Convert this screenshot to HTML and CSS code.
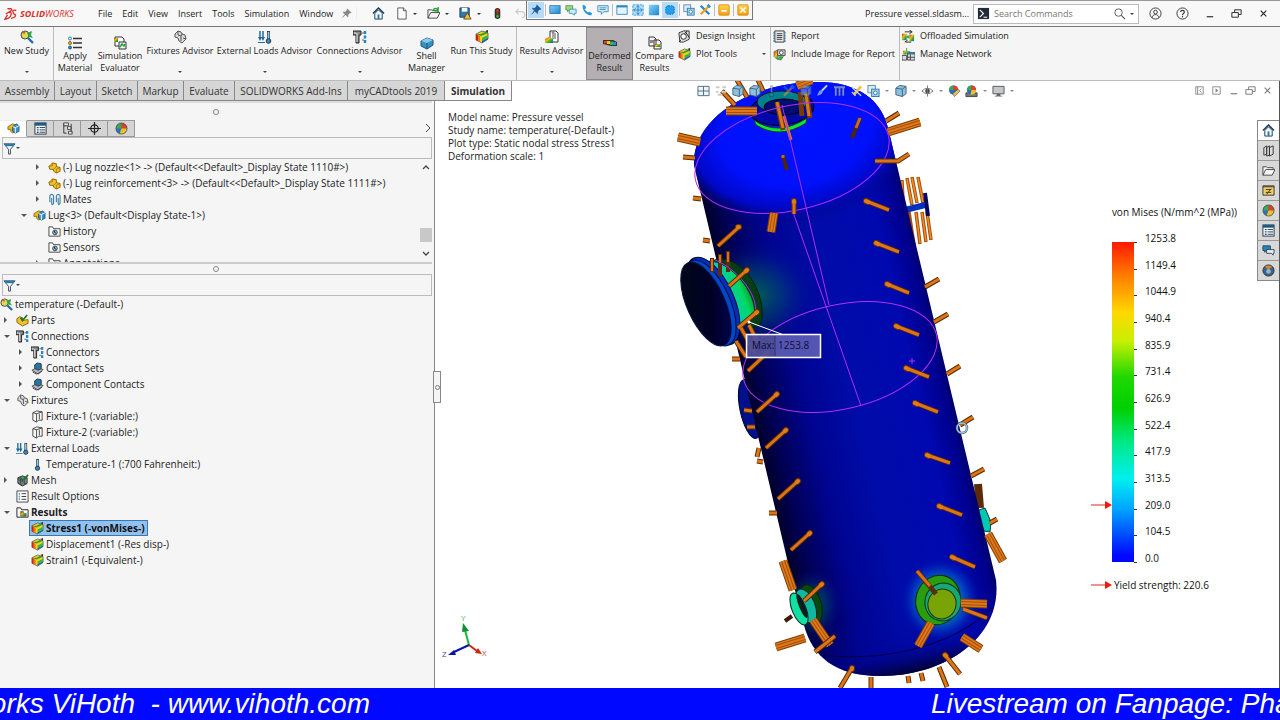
FILE: index.html
```html
<!DOCTYPE html>
<html lang="en">
<head>
<meta charset="utf-8">
<title>SOLIDWORKS - Pressure vessel.sldasm</title>
<link rel="stylesheet" href="styles.css">
</head>
<body>
<svg class="defs" aria-hidden="true">
  <defs>
    <linearGradient id="hot" x1="0" y1="0" x2="1" y2="1"><stop offset="0" stop-color="#e02010"/><stop offset=".4" stop-color="#f2c010"/><stop offset=".65" stop-color="#30b030"/><stop offset="1" stop-color="#1060c0"/></linearGradient>
    <linearGradient id="sky" x1="0" y1="0" x2="1" y2="1"><stop offset="0" stop-color="#8ad4f8"/><stop offset="1" stop-color="#1a86d0"/></linearGradient>
    <linearGradient id="amber" x1="0" y1="0" x2="0" y2="1"><stop offset="0" stop-color="#ffd84a"/><stop offset="1" stop-color="#f59c10"/></linearGradient>
  </defs>
  <symbol id="i-study" viewBox="0 0 14 14"><circle cx="5" cy="5" r="4" fill="#d8dc50" stroke="#446"/><path d="M8 8l5 5" stroke="#1c6ea8" stroke-width="2.4"/><path d="M7 3l5-2-1 4 2 3-4-1z" fill="#3aa04a"/><path d="M2 2l3 1" stroke="#e06020" stroke-width="2"/></symbol>
  <symbol id="i-material" viewBox="0 0 14 14"><path d="M5 2.5h9M5 7h9M5 11.500h9" stroke="#333" stroke-width="1.500"/><circle cx="2" cy="2.500" r="1.500" fill="#fff" stroke="#2a7aa8"/><circle cx="2" cy="7" r="1.500" fill="#f4c030" stroke="#8a6a10"/><circle cx="2" cy="11.500" r="1.500" fill="#2a8cc0" stroke="#205a80"/></symbol>
  <symbol id="i-eval" viewBox="0 0 14 14"><path d="M2 1h7l2 2v7H2z" fill="#fff" stroke="#333"/><path d="M1 2h4v4H1z" fill="url(#hot)"/><path d="M6 6h7v7H6z" fill="#f4f4f4" stroke="#333"/><path d="M7 11l2-3 2 2 1-2" stroke="#28a038" stroke-width="1.500" fill="none"/></symbol>
  <symbol id="i-fixture" viewBox="0 0 14 14"><path d="M2 4l3-3 3 1 1 2 3 1 1 4-4 4-3-2-1-3-3-1z" fill="#dcdcdc" stroke="#555"/><path d="M5 1v4l3 1 1-2M8 6v5M10 8l3 1" stroke="#555" fill="none"/></symbol>
  <symbol id="i-loads" viewBox="0 0 14 14"><path d="M2 1v8M5 1v8" stroke="#1f6f9c" stroke-width="1.500"/><path d="M0 7l2 4 1.500-3L5 11l2-4zM0 12h7v1H0z" fill="#1f6f9c"/><path d="M10.500 1v8" stroke="#444" stroke-width="3"/><path d="M10.500 2v8" stroke="#8fd0f0" stroke-width="1.500"/><circle cx="10.500" cy="11" r="2.300" fill="#2a8cc8" stroke="#333"/></symbol>
  <symbol id="i-bolt" viewBox="0 0 14 14"><path d="M0 1h8v4H6v8H3V5H0z" fill="#888" stroke="#222"/><path d="M2 2v2M4 3v9" stroke="#e8e8e8"/><path d="M12 1v12" stroke="#2088c8" stroke-width="2.500" stroke-dasharray="3 1.500"/><path d="M9 3h2M9 10h2" stroke="#666"/></symbol>
  <symbol id="i-shell" viewBox="0 0 14 14"><path d="M1 5l6-3 6 2v5l-6 4-6-3z" fill="#3a90c4" stroke="#1d5478"/><path d="M1 5l6 2 6-3-6-2z" fill="#8cc8e8"/><path d="M7 7v6" stroke="#1d5478"/></symbol>
  <symbol id="i-plot" viewBox="0 0 14 14"><path d="M1 4l6-3 6 2v6l-6 4-6-3z" fill="#f8d020" stroke="#444" stroke-width=".7"/><path d="M1 4l2 1v6l-2-1z" fill="#d82010"/><path d="M3 5l2 1v6l-2-1z" fill="#f07818"/><path d="M1 4l5 2 7-3-3-1-4 2z" fill="#30a030"/><path d="M7 8l6-3v3l-6 3z" fill="#38b840"/><path d="M7 11l6-3v1.500L7 13z" fill="#1a60b8"/><path d="M10 1l3-1v3z" fill="#333"/></symbol>
  <symbol id="i-results" viewBox="0 0 14 14"><path d="M5 1h6l2 2v9H5z" fill="#fff" stroke="#333"/><path d="M7 4h4M7 6h4M7 8h4" stroke="#555"/><path d="M0 9l4-2 4 2v4H0z" fill="url(#hot)"/><circle cx="8" cy="2" r="1.500" fill="#888"/></symbol>
  <symbol id="i-deformed" viewBox="0 0 14 14"><path d="M0 4h10l4 2v4h-6L0 8z" fill="#333"/><path d="M1 5h3v2.500H1z" fill="#e83820"/><path d="M4 5h3v3H4z" fill="#f4c820"/><path d="M7 5.500h3V9H7z" fill="#30b848"/><path d="M10 6h3v3h-3z" fill="#2890d0"/></symbol>
  <symbol id="i-compare" viewBox="0 0 14 14"><path d="M1 1h5l2 2v7H1zM6 4h5l2 2v7H6z" fill="#f4f4f4" stroke="#333"/><path d="M2 4h4v3H2z" fill="#888"/><path d="M7 8h5v3H7z" fill="url(#hot)"/></symbol>
  <symbol id="i-insight" viewBox="0 0 14 14"><path d="M1 3l5-2h6v9l-6 3H2z" fill="#ddd" stroke="#333"/><circle cx="6" cy="7" r="3" fill="#fff" stroke="#222"/><path d="M3 11l-2 2M8 2l4 6M10 1l-3 3" stroke="#222"/></symbol>
  <symbol id="i-report" viewBox="0 0 14 14"><path d="M2 1h10v12H2z" fill="#e8ecef" stroke="#333"/><path d="M4 4h6M4 6h6M4 8h6M4 10h6" stroke="#333"/><path d="M1 2v11M13 2v11" stroke="#2a7aa8" stroke-dasharray="2 1"/></symbol>
  <symbol id="i-include" viewBox="0 0 14 14"><path d="M1 4l4-2v8l4 3-5-1-3-3z" fill="url(#hot)" stroke="#555" stroke-width=".5"/><path d="M5 2h8v6H5z" fill="#ddd" stroke="#444"/><circle cx="9" cy="5" r="2" fill="#fff" stroke="#444"/><path d="M5 9h7l-3 4z" fill="#30a040"/></symbol>
  <symbol id="i-offload" viewBox="0 0 14 14"><path d="M0 4h5v7H0z" fill="url(#hot)"/><path d="M8 5h5v7H8z" fill="url(#hot)"/><path d="M3 2h7M8 0l3 2-3 2M10 13H4M6 11l-3 2" stroke="#222" fill="none"/><path d="M5 6h3v3H5z" fill="#38b048"/></symbol>
  <symbol id="i-network" viewBox="0 0 14 14"><path d="M1 3h4v4H1z" fill="url(#hot)"/><path d="M0 8h5v5H0zM6 5h8v8H6z" fill="#ddd" stroke="#444"/><path d="M6 5h8v2H6z" fill="#2a7aa8"/><path d="M6 10h8M9 7v6" stroke="#444"/><path d="M5 0v4h4" stroke="#30a040" fill="none"/></symbol>
  <symbol id="i-home" viewBox="0 0 14 14"><path d="M1 7l6-6 6 6" fill="none" stroke="#17395a" stroke-width="1.500"/><path d="M3 7v6h8V7L7 3z" fill="#f0f6fa" stroke="#17395a"/><path d="M6 8h2v5H6z" fill="#2a7aa8"/></symbol>
  <symbol id="i-doc" viewBox="0 0 14 14"><path d="M3 1h6l3 3v9H3z" fill="#fff" stroke="#555"/><path d="M9 1v3h3" fill="#ddd" stroke="#555"/></symbol>
  <symbol id="i-open" viewBox="0 0 14 14"><path d="M1 12V3h4l1 1h6v2M1 12l3-6h10l-3 6z" fill="#f4f4f0" stroke="#444"/><path d="M6 4c2-3 4-3 6-1M12 0v4H8" fill="none" stroke="#28a038" stroke-width="1.500"/></symbol>
  <symbol id="i-save" viewBox="0 0 14 14"><path d="M1 1h10v10H1z" fill="#2a7cb4" stroke="#1d3a54"/><path d="M3 1h6v4H3z" fill="#fff"/><path d="M9 6l4 7H5z" fill="#ffc020" stroke="#333" stroke-width=".8"/></symbol>
  <symbol id="i-light" viewBox="0 0 14 14"><rect x="4" y="1" width="6" height="12" rx="3" fill="#333"/><circle cx="7" cy="4" r="1.500" fill="#e83020"/><circle cx="7" cy="7" r="1.500" fill="#704818"/><circle cx="7" cy="10" r="1.500" fill="#30c048"/></symbol>
  <symbol id="i-undo" viewBox="0 0 14 14"><path d="M5 2L2 5l3 3M2 5h6c5 0 4 6 1 7" fill="none" stroke="#ccc" stroke-width="1.300"/></symbol>
  <symbol id="i-pin" viewBox="0 0 14 14"><path d="M8 1l5 5-2 .5-2 2 0 3L5.500 8.500 2 12l3-4L2.500 5h3l2-2z" fill="currentColor" stroke="currentColor" stroke-width=".6"/></symbol>
  <symbol id="i-screen" viewBox="0 0 14 14"><rect x="1" y="2" width="12" height="9" fill="url(#sky)" stroke="#2a70a8"/></symbol>
  <symbol id="i-chats" viewBox="0 0 14 14"><path d="M1 2h8v5H5L3 9V7H1z" fill="#9edb7c" stroke="#4a9a3a"/><path d="M5 6h8v5h-2v2l-3-2H5z" fill="#c8ecfa" stroke="#4a90b8"/></symbol>
  <symbol id="i-phone" viewBox="0 0 14 14"><path d="M2 1l3 1 1 3-2 1 4 4 2-1 3 2-1 2c-5 1-11-5-10-12z" fill="#1c98e0"/></symbol>
  <symbol id="i-speech" viewBox="0 0 14 14"><path d="M1 2h12v7H8l-3 3V9H1z" fill="#d8f0fc" stroke="#3888b8"/><path d="M3 4.500h8M3 6.500h7" stroke="#3888b8"/></symbol>
  <symbol id="i-window" viewBox="0 0 14 14"><rect x="1" y="2" width="12" height="10" fill="#e4f4fe" stroke="#2a88c8"/><path d="M1 3h12" stroke="#2a88c8" stroke-width="2"/></symbol>
  <symbol id="i-full" viewBox="0 0 14 14"><rect x="1" y="1" width="12" height="12" fill="#b8e0fa" stroke="#2a98e0" stroke-dasharray="3 1"/><path d="M7 2v10M2 7h10M5 4l2-2 2 2M5 10l2 2 2-2M4 5L2 7l2 2M10 5l2 2-2 2" fill="none" stroke="#187cc0"/></symbol>
  <symbol id="i-blue" viewBox="0 0 14 14"><rect x="1" y="1" width="12" height="12" rx="1" fill="url(#sky)"/></symbol>
  <symbol id="i-target" viewBox="0 0 14 14"><rect x="2" y="2" width="10" height="10" rx="3" fill="#22a0ee" stroke="#0c68b0" stroke-dasharray="2 1"/></symbol>
  <symbol id="i-copy" viewBox="0 0 14 14"><rect x="1" y="1" width="8" height="8" fill="#d8eefa" stroke="#5a88a8"/><rect x="5" y="5" width="8" height="8" fill="#a8d4f0" stroke="#2a78a8"/><circle cx="9" cy="9" r="2" fill="#fff" stroke="#2a78a8"/></symbol>
  <symbol id="i-tools" viewBox="0 0 14 14"><path d="M2 2l10 10" stroke="#2a80c0" stroke-width="2.500"/><path d="M12 2L2 12" stroke="#f0a020" stroke-width="2.500"/><path d="M10 1l3 3" stroke="#1c98e0" stroke-width="3"/></symbol>
  <symbol id="i-minbox" viewBox="0 0 14 14"><rect x="1" y="1" width="12" height="12" rx="1" fill="url(#amber)" stroke="#d88a10"/><path d="M4 8h6" stroke="#fff" stroke-width="2"/></symbol>
  <symbol id="i-xbox" viewBox="0 0 14 14"><rect x="1" y="1" width="12" height="12" rx="1" fill="url(#amber)" stroke="#d88a10"/><path d="M4 4l6 6M10 4l-6 6" stroke="#fff" stroke-width="1.800"/></symbol>
  <symbol id="i-user" viewBox="0 0 14 14"><circle cx="7" cy="7" r="6" fill="none" stroke="#333"/><circle cx="7" cy="5.500" r="2" fill="none" stroke="#333"/><path d="M3.500 11.500c.5-4.500 6.500-4.500 7 0" fill="none" stroke="#333"/></symbol>
  <symbol id="i-help" viewBox="0 0 14 14"><circle cx="7" cy="7" r="6" fill="none" stroke="#333"/><path d="M5 5.500c0-2.500 4-2.500 4 0 0 1.500-2 1.500-2 3M7 9.500v1.500" fill="none" stroke="#333" stroke-width="1.200"/></symbol>
  <symbol id="i-min" viewBox="0 0 14 14"><path d="M4 10.500h7" stroke="currentColor" stroke-width="1.200"/></symbol>
  <symbol id="i-restore" viewBox="0 0 14 14"><path d="M2 6h7v5H2zM5 6V3h7v5H9" fill="none" stroke="currentColor"/></symbol>
  <symbol id="i-close" viewBox="0 0 14 14"><path d="M4 4l6 6M10 4l-6 6" stroke="currentColor" stroke-width="1.200"/></symbol>
  <symbol id="i-dockl" viewBox="0 0 14 14"><path d="M3 3h8v8H3zM5 3v8M9 5L7 7l2 2" fill="none" stroke="#888"/></symbol>
  <symbol id="i-dockr" viewBox="0 0 14 14"><path d="M3 3h8v8H3z" fill="none" stroke="#888"/><path d="M6 4.500v5L9 7z" fill="#888"/></symbol>
  <symbol id="i-lens" viewBox="0 0 14 14"><circle cx="6" cy="6" r="4" fill="none" stroke="#555"/><path d="M9 9l4 4" stroke="#555" stroke-width="1.200"/></symbol>
  <symbol id="i-prompt" viewBox="0 0 14 14"><rect x="1" y="1" width="12" height="12" fill="#222b35"/><path d="M3 3l4 4-4 4M7 11h4" fill="none" stroke="#fff" stroke-width="1.200"/></symbol>
  <symbol id="i-asm" viewBox="0 0 14 14"><path d="M1 5l5-3 3 1v7l-3 2-2-2v-2H1z" fill="#f0b820" stroke="#7a5a08" stroke-width=".8"/><path d="M6 5l4-3 3 2v6l-4 2-3-2z" fill="#3a94c8" stroke="#1d4a68" stroke-width=".8"/><path d="M6 5l3 1 4-2M9 6v6" stroke="#fff" fill="none"/></symbol>
  <symbol id="i-part" viewBox="0 0 14 14"><path d="M1 6l4-4 4 1v3l4 1v4l-4 2-3-2V9L2 9z" fill="#f4c02c" stroke="#8a6408"/><path d="M5 2v3l-4 1M9 6l-3 3M13 7l-4 2v4" fill="none" stroke="#8a6408" stroke-width=".7"/></symbol>
  <symbol id="i-parts" viewBox="0 0 14 14"><path d="M1 5l3-2 3 1v3l6-1v4l-6 3-6-4z" fill="#f4c02c" stroke="#8a6408"/><path d="M5 4l2 3 5-6" fill="none" stroke="#187a30" stroke-width="1.800"/></symbol>
  <symbol id="i-mates" viewBox="0 0 14 14"><path d="M2 10V3q2-3 4 0v8q-2 3-2 0V5M9 10V3q2-3 4 0v8q-2 3-2 0V5" fill="none" stroke="#3a80a8" stroke-width="1.200"/></symbol>
  <symbol id="i-folder" viewBox="0 0 14 14"><path d="M1 12V2h4l1 2h7v8z" fill="#f8f8f8" stroke="#444"/><circle cx="7.500" cy="8" r="2.500" fill="#9ab8c8" stroke="#345"/><path d="M7 6.500V8l2 1" stroke="#222" fill="none"/></symbol>
  <symbol id="i-resfolder" viewBox="0 0 14 14"><path d="M1 12V2h4l1 2h7v8z" fill="#f8f8f8" stroke="#222"/><path d="M5 6h3v2h3v3H5z" fill="url(#hot)" stroke="#333" stroke-width=".5"/></symbol>
  <symbol id="i-contact" viewBox="0 0 14 14"><path d="M1 9l5-3 7 2-5 5z" fill="#bbb" stroke="#444"/><path d="M4 3l3-2 4 1v5L8 9 4 7z" fill="#2a74a0" stroke="#1d3a54"/><path d="M2 11l4 2 6-3" stroke="#444" fill="none"/></symbol>
  <symbol id="i-cyl" viewBox="0 0 14 14"><path d="M2 3l4-2 6 1v9H8l-2 2-4-2z" fill="#f8f8f8" stroke="#444"/><path d="M2 3l4 1v9M6 4l6-2M9 4v6" fill="none" stroke="#444"/></symbol>
  <symbol id="i-thermo" viewBox="0 0 14 14"><path d="M7 1v8" stroke="#444" stroke-width="3"/><path d="M7 2v7" stroke="#8fd0f0" stroke-width="1.500"/><circle cx="7" cy="11" r="2.300" fill="#2a8cc8" stroke="#333"/></symbol>
  <symbol id="i-mesh" viewBox="0 0 14 14"><path d="M2 4l5-2 5 2v6l-5 3-5-3z" fill="#7c8c8c" stroke="#333"/><path d="M2 6l10 5M2 9l5 3M5 3v9M9 3v9M2 4l5 3 5-3" stroke="#333" fill="none" stroke-width=".7"/><path d="M5 4l2 3 6-6" stroke="#187a30" fill="none" stroke-width="1.800"/></symbol>
  <symbol id="i-options" viewBox="0 0 14 14"><path d="M1 1h12v12H1z" fill="#fff" stroke="#444"/><path d="M6 4h5M6 7h5M6 10h5" stroke="#333"/><path d="M3 4h1M3 7h1M3 10h1" stroke="#2a7aa8" stroke-width="2"/></symbol>
  <symbol id="i-funnel" viewBox="0 0 14 14"><path d="M1 2h12L8 8v5H6V8z" fill="#fff" stroke="#345"/><path d="M1 2h12l-2 2.500H3z" fill="#2a7aa8"/></symbol>
  <symbol id="i-list" viewBox="0 0 14 14"><rect x="1" y="1" width="12" height="12" fill="#fff" stroke="#234"/><path d="M1 2.500h12" stroke="#1d5a84" stroke-width="3"/><path d="M3 6h2M3 8.500h2M3 11h2" stroke="#1d5a84" stroke-width="1.500"/><path d="M6 6h6M6 8.500h6M6 11h6" stroke="#234"/></symbol>
  <symbol id="i-config" viewBox="0 0 14 14"><path d="M3 1v11h3M3 4h3" stroke="#333" fill="none"/><path d="M3 1h5v3H3zM7 5h4v3H7zM8 10h4v3H8zM11 2v9" fill="#eee" stroke="#444"/></symbol>
  <symbol id="i-cross" viewBox="0 0 14 14"><circle cx="7" cy="7" r="4" fill="none" stroke="#222" stroke-width="1.300"/><path d="M7 0v14M0 7h14" stroke="#222" stroke-width="1.300"/></symbol>
  <symbol id="i-ball" viewBox="0 0 14 14"><circle cx="7" cy="7" r="6" fill="#2a70c0"/><path d="M7 7V1a6 6 0 0 0-6 6z" fill="#3aa850"/><path d="M7 7V1a6 6 0 0 1 6 6z" fill="#e04028"/><path d="M7 7h6a6 6 0 0 1-8 5.500z" fill="#f4c020"/><circle cx="7" cy="7" r="6" fill="none" stroke="#444" stroke-width=".7"/></symbol>
  <symbol id="i-grid" viewBox="0 0 14 14"><path d="M1 2h12v10H1zM1 7h12M7 2v10" fill="#eef4f8" stroke="#4a6a80"/></symbol>
  <symbol id="i-dim" viewBox="0 0 14 14"><path d="M2 3h4M9 3h4M2 8h3M8 8h5M4 11h5" stroke="#ccc" stroke-width="2"/></symbol>
  <symbol id="i-cube" viewBox="0 0 14 14"><path d="M2 4l4-3 7 1v8l-4 3-7-2z" fill="#8cc0e0" stroke="#41647c"/><path d="M2 4l7 1v8M9 5l4-3" fill="none" stroke="#41647c"/></symbol>
  <symbol id="i-brush" viewBox="0 0 14 14"><path d="M12 1L6 7" stroke="#c8d4e8" stroke-width="2"/><path d="M7 6c1 4-3 6-6 6 2-2 1-6 6-6z" fill="#7898d8"/></symbol>
  <symbol id="i-bars" viewBox="0 0 14 14"><path d="M1 3h12M3 4v8M7 4v8M11 4v8" stroke="#7888c0" stroke-width="2"/></symbol>
  <symbol id="i-pencil" viewBox="0 0 14 14"><path d="M12 2L4 11" stroke="#f0c040" stroke-width="3"/><path d="M2 3l10 9M2 8l4 4" stroke="#c8ccd8" stroke-width="1.500"/></symbol>
  <symbol id="i-eye" viewBox="0 0 14 14"><path d="M1 7q6-6 12 0-6 6-12 0z" fill="#fff" stroke="#777"/><circle cx="7" cy="7" r="2.500" fill="#444"/><path d="M7 1v12" stroke="#777"/></symbol>
  <symbol id="i-look" viewBox="0 0 14 14"><circle cx="6" cy="6" r="5" fill="#2a70c0"/><path d="M6 6V1a5 5 0 0 0-5 5z" fill="#3aa850"/><path d="M6 6V1a5 5 0 0 1 5 5z" fill="#e04028"/><path d="M7 13l-2-3 6-5 2 2z" fill="#f0c050" stroke="#555" stroke-width=".7"/></symbol>
  <symbol id="i-scene" viewBox="0 0 14 14"><path d="M1 9h12v4H1z" fill="#777" stroke="#444"/><circle cx="7" cy="6" r="5" fill="#2a70c0"/><path d="M7 6V1a5 5 0 0 0-5 5z" fill="#3aa850"/><path d="M7 6V1a5 5 0 0 1 5 5z" fill="#e04028"/><path d="M7 6h5a5 5 0 0 1-6 5z" fill="#f4c020"/></symbol>
  <symbol id="i-monitor" viewBox="0 0 14 14"><path d="M1 2h12v8H1z" fill="#c4c8cc" stroke="#555"/><path d="M5 10h4v2h2v1H3v-1h2z" fill="#666"/></symbol>
  <symbol id="i-books" viewBox="0 0 14 14"><path d="M2 4l3-2v9l-3 1zM5 4l3-2v10l-3 1zM8 4l4-2v9l-4 2z" fill="#ddd" stroke="#333"/></symbol>
  <symbol id="i-open2" viewBox="0 0 14 14"><path d="M1 12V3h4l1 1h6v2M1 12l3-6h10l-3 6z" fill="#f6f6f4" stroke="#444"/></symbol>
  <symbol id="i-palette" viewBox="0 0 14 14"><path d="M1 2h12v10H1z" fill="#f4d060" stroke="#333"/><path d="M1 3h12M4 6h6M4 9h6M5 11l5-6" stroke="#333"/></symbol>
  <symbol id="i-forum" viewBox="0 0 14 14"><path d="M1 2h8v5H4L3 9V7H1z" fill="#2a80b8" stroke="#1d4a68"/><path d="M5 6h8v4h-1v2l-2-2H5z" fill="#e4f0f6" stroke="#345"/></symbol>
  <symbol id="i-globe" viewBox="0 0 14 14"><circle cx="7" cy="7" r="6" fill="#3a6488" stroke="#333"/><path d="M3 3q4-3 8 0l-4 3z" fill="#e08030"/><circle cx="7" cy="8" r="2.500" fill="#88b8d8"/></symbol>
</svg>

<header class="titlebar">
  <div class="brand">
    <svg class="brand-mark" viewBox="0 0 16 14"><path d="M4 1h4q2 1-1 3L2 7M6 5q3 0 2 3-1 4-7 5l3-5M14 3q-4-1-4 1t3 4q1 3-5 4" fill="none" stroke="#d8302c" stroke-width="1.500"/></svg>
    <span><b>SOLID</b>WORKS</span>
  </div>
  <nav class="menu">
    <button>File</button><button>Edit</button><button>View</button><button>Insert</button><button>Tools</button><button>Simulation</button><button>Window</button>
  </nav>
  <svg class="ico pin"><use href="#i-pin"/></svg>
  <div class="quick">
    <button aria-label="Home"><svg class="ico"><use href="#i-home"/></svg></button>
    <button class="drop" aria-label="New"><svg class="ico"><use href="#i-doc"/></svg></button>
    <button class="drop" aria-label="Open"><svg class="ico"><use href="#i-open"/></svg></button>
    <button class="drop" aria-label="Save"><svg class="ico"><use href="#i-save"/></svg></button>
    <button aria-label="Rebuild"><svg class="ico"><use href="#i-light"/></svg></button>
    <button aria-label="Undo"><svg class="ico"><use href="#i-undo"/></svg></button>
  </div>
  <span class="doc-title">Pressure vessel.sldasm...</span>
  <label class="search">
    <svg class="ico"><use href="#i-prompt"/></svg>
    <input type="text" placeholder="Search Commands" aria-label="Search Commands">
    <svg class="ico"><use href="#i-lens"/></svg><i class="caret"></i>
  </label>
  <div class="win">
    <button aria-label="Account"><svg class="ico"><use href="#i-user"/></svg></button>
    <button aria-label="Help"><svg class="ico"><use href="#i-help"/></svg></button>
    <button aria-label="Minimize"><svg class="ico"><use href="#i-min"/></svg></button>
    <button aria-label="Restore"><svg class="ico"><use href="#i-restore"/></svg></button>
    <button aria-label="Close"><svg class="ico"><use href="#i-close"/></svg></button>
  </div>
  <div class="floatbar">
    <button class="on" aria-label="Pin"><svg class="ico"><use href="#i-pin"/></svg></button><hr>
    <button aria-label="Screen"><svg class="ico"><use href="#i-screen"/></svg></button>
    <button aria-label="Chat"><svg class="ico"><use href="#i-chats"/></svg></button>
    <button aria-label="Call"><svg class="ico"><use href="#i-phone"/></svg></button>
    <button aria-label="Message"><svg class="ico"><use href="#i-speech"/></svg></button><hr>
    <button aria-label="Window"><svg class="ico"><use href="#i-window"/></svg></button>
    <button aria-label="Fit"><svg class="ico"><use href="#i-full"/></svg></button>
    <button aria-label="Original size"><svg class="ico"><use href="#i-blue"/></svg></button>
    <button class="on" aria-label="Scaled"><svg class="ico"><use href="#i-target"/></svg></button><hr>
    <button aria-label="Copy"><svg class="ico"><use href="#i-copy"/></svg></button>
    <button aria-label="Settings"><svg class="ico"><use href="#i-tools"/></svg></button><hr>
    <button aria-label="Collapse"><svg class="ico"><use href="#i-minbox"/></svg></button><hr>
    <button aria-label="Disconnect"><svg class="ico"><use href="#i-xbox"/></svg></button>
  </div>
</header>

<section class="ribbon">
  <button class="tool split end"><svg class="ico"><use href="#i-study"/></svg>New Study<i class="caret"></i></button>
  <button class="tool tall"><svg class="ico"><use href="#i-material"/></svg>Apply<br>Material</button>
  <button class="tool tall"><svg class="ico"><use href="#i-eval"/></svg>Simulation<br>Evaluator</button>
  <button class="tool split"><svg class="ico"><use href="#i-fixture"/></svg>Fixtures Advisor<i class="caret"></i></button>
  <button class="tool split"><svg class="ico"><use href="#i-loads"/></svg>External Loads Advisor<i class="caret"></i></button>
  <button class="tool split"><svg class="ico"><use href="#i-bolt"/></svg>Connections Advisor<i class="caret"></i></button>
  <button class="tool tall"><svg class="ico"><use href="#i-shell"/></svg>Shell<br>Manager</button>
  <button class="tool split end"><svg class="ico"><use href="#i-plot"/></svg>Run This Study<i class="caret"></i></button>
  <button class="tool split"><svg class="ico"><use href="#i-results"/></svg>Results Advisor<i class="caret"></i></button>
  <button class="tool tall pressed"><svg class="ico"><use href="#i-deformed"/></svg>Deformed<br>Result</button>
  <button class="tool tall"><svg class="ico"><use href="#i-compare"/></svg>Compare<br>Results</button>
  <div class="stack end">
    <button><svg class="ico"><use href="#i-insight"/></svg>Design Insight</button>
    <button><svg class="ico"><use href="#i-plot"/></svg>Plot Tools<i class="caret"></i></button>
  </div>
  <div class="stack end">
    <button><svg class="ico"><use href="#i-report"/></svg>Report</button>
    <button><svg class="ico"><use href="#i-include"/></svg>Include Image for Report</button>
  </div>
  <div class="stack">
    <button><svg class="ico"><use href="#i-offload"/></svg>Offloaded Simulation</button>
    <button><svg class="ico"><use href="#i-network"/></svg>Manage Network</button>
  </div>
</section>

<main class="work">
  <nav class="tabs">
    <button>Assembly</button><button>Layout</button><button>Sketch</button><button>Markup</button><button>Evaluate</button><button>SOLIDWORKS Add-Ins</button><button>myCADtools 2019</button><button class="active">Simulation</button>
  </nav>

  <aside class="panel">
    <div class="grip"></div>
    <div class="ptabs">
      <button class="active" aria-label="Feature tree"><svg class="ico"><use href="#i-asm"/></svg></button>
      <button aria-label="Properties"><svg class="ico"><use href="#i-list"/></svg></button>
      <button aria-label="Configurations"><svg class="ico"><use href="#i-config"/></svg></button>
      <button aria-label="Dimensions"><svg class="ico"><use href="#i-cross"/></svg></button>
      <button aria-label="Display"><svg class="ico"><use href="#i-ball"/></svg></button>
      <svg class="chev" viewBox="0 0 8 10"><path d="M2 1l4 4-4 4" fill="none" stroke="#444"/></svg>
    </div>
    <label class="filter"><svg class="ico"><use href="#i-funnel"/></svg><i class="caret"></i><input type="text" aria-label="Filter features"></label>
    <div class="feature">
      <ul class="tree">
        <li class="l3"><i class="shut"></i><svg class="ico"><use href="#i-part"/></svg><span>(-) Lug nozzle&lt;1&gt; -&gt; (Default&lt;&lt;Default&gt;_Display State 1110#&gt;)</span></li>
        <li class="l3"><i class="shut"></i><svg class="ico"><use href="#i-part"/></svg><span>(-) Lug reinforcement&lt;3&gt; -&gt; (Default&lt;&lt;Default&gt;_Display State 1111#&gt;)</span></li>
        <li class="l3"><i class="shut"></i><svg class="ico"><use href="#i-mates"/></svg><span>Mates</span></li>
        <li class="l2"><i class="open"></i><svg class="ico"><use href="#i-asm"/></svg><span>Lug&lt;3&gt; (Default&lt;Display State-1&gt;)</span></li>
        <li class="l3"><i></i><svg class="ico"><use href="#i-folder"/></svg><span>History</span></li>
        <li class="l3"><i></i><svg class="ico"><use href="#i-folder"/></svg><span>Sensors</span></li>
        <li class="l3"><i class="shut"></i><svg class="ico"><use href="#i-folder"/></svg><span>Annotations</span></li>
      </ul>
      <div class="scroll">
        <svg viewBox="0 0 10 8"><path d="M2 6l3-3 3 3" fill="none" stroke="#444" stroke-width="1.300"/></svg>
        <div class="thumb"></div>
        <svg viewBox="0 0 10 8"><path d="M2 2l3 3 3-3" fill="none" stroke="#444" stroke-width="1.300"/></svg>
      </div>
    </div>
    <div class="grip lower"></div>
    <label class="filter"><svg class="ico"><use href="#i-funnel"/></svg><i class="caret"></i><input type="text" aria-label="Filter study"></label>
    <ul class="tree study">
      <li class="l0"><svg class="ico"><use href="#i-study"/></svg><span>temperature (-Default-)</span></li>
      <li class="l1"><i class="shut"></i><svg class="ico"><use href="#i-parts"/></svg><span>Parts</span></li>
      <li class="l1"><i class="open"></i><svg class="ico"><use href="#i-bolt"/></svg><span>Connections</span></li>
      <li class="l2"><i class="shut"></i><svg class="ico"><use href="#i-bolt"/></svg><span>Connectors</span></li>
      <li class="l2"><i class="shut"></i><svg class="ico"><use href="#i-contact"/></svg><span>Contact Sets</span></li>
      <li class="l2"><i class="shut"></i><svg class="ico"><use href="#i-contact"/></svg><span>Component Contacts</span></li>
      <li class="l1"><i class="open"></i><svg class="ico"><use href="#i-fixture"/></svg><span>Fixtures</span></li>
      <li class="l2"><i></i><svg class="ico"><use href="#i-cyl"/></svg><span>Fixture-1 (:variable:)</span></li>
      <li class="l2"><i></i><svg class="ico"><use href="#i-cyl"/></svg><span>Fixture-2 (:variable:)</span></li>
      <li class="l1"><i class="open"></i><svg class="ico"><use href="#i-loads"/></svg><span>External Loads</span></li>
      <li class="l2"><i></i><svg class="ico"><use href="#i-thermo"/></svg><span>Temperature-1 (:700 Fahrenheit:)</span></li>
      <li class="l1"><i class="shut"></i><svg class="ico"><use href="#i-mesh"/></svg><span>Mesh</span></li>
      <li class="l1"><i></i><svg class="ico"><use href="#i-options"/></svg><span>Result Options</span></li>
      <li class="l1"><i class="open"></i><svg class="ico"><use href="#i-resfolder"/></svg><span><b>Results</b></span></li>
      <li class="l2"><i></i><div class="picked"><svg class="ico"><use href="#i-plot"/></svg><b>Stress1 (-vonMises-)</b></div></li>
      <li class="l2"><i></i><svg class="ico"><use href="#i-plot"/></svg><span>Displacement1 (-Res disp-)</span></li>
      <li class="l2"><i></i><svg class="ico"><use href="#i-plot"/></svg><span>Strain1 (-Equivalent-)</span></li>
    </ul>
    <div class="side-grip"></div>
  </aside>

  <section class="view">
    <svg class="model" viewBox="435 81 844 607" preserveAspectRatio="xMidYMid slice">
      <defs>
        <linearGradient id="body" gradientUnits="userSpaceOnUse" x1="742" y1="392" x2="950" y2="343">
          <stop offset="0" stop-color="#00001c"/><stop offset=".1" stop-color="#000050"/><stop offset=".28" stop-color="#000490"/><stop offset=".5" stop-color="#000ca8"/><stop offset=".8" stop-color="#0008b0"/><stop offset=".92" stop-color="#00008c"/><stop offset="1" stop-color="#00003c"/>
        </linearGradient>
        <radialGradient id="cap" cx=".5" cy=".45" r=".55">
          <stop offset="0" stop-color="#0014ff"/><stop offset=".6" stop-color="#0010fa"/><stop offset=".82" stop-color="#0008c8"/><stop offset="1" stop-color="#000478" stop-opacity="0"/>
        </radialGradient>
        <linearGradient id="base" gradientUnits="userSpaceOnUse" x1="885" y1="610" x2="900" y2="676"><stop offset="0" stop-color="#0008b0" stop-opacity="0"/><stop offset=".65" stop-color="#000498" stop-opacity=".5"/><stop offset="1" stop-color="#000030"/></linearGradient>
        <radialGradient id="glow"><stop offset="0" stop-color="#00a040"/><stop offset=".5" stop-color="#005870" stop-opacity=".7"/><stop offset="1" stop-color="#0010a0" stop-opacity="0"/></radialGradient>
        <radialGradient id="glow2"><stop offset=".4" stop-color="#0090b0"/><stop offset=".7" stop-color="#0050c8" stop-opacity=".6"/><stop offset="1" stop-color="#0010b0" stop-opacity="0"/></radialGradient>
        <linearGradient id="neck" x1="0" y1="1" x2="1" y2=".5"><stop offset="0" stop-color="#0060ff"/><stop offset=".45" stop-color="#00c8e0"/><stop offset=".8" stop-color="#00d860"/><stop offset="1" stop-color="#108010"/></linearGradient>
        <linearGradient id="plate" x1="0" y1="0" x2="1" y2="1"><stop offset="0" stop-color="#003080"/><stop offset=".15" stop-color="#000818"/><stop offset=".6" stop-color="#000028"/><stop offset="1" stop-color="#000860"/></linearGradient>
        <clipPath id="hull"><path d="M694 165C692 120 748 82 818 82C858 82 883 100 889 132L996 580C1003 640 940 677 880 676C835 676 812 656 804 625L788 563Z"/></clipPath>
        <path id="rods" d="M794 202v12M738 228L718 246M866 201L889 210M876 243L899 252M875 161H898L909 154M886 121L899 113M683 157L695 158M693 198L701 199M703 240L710 241M722 91L735 105M737 80L747 97M758 80L763 91M887 284L909 293M896 326L919 335M906 368L929 377M915 403L938 412M927 455L950 463M939 506L962 515M952 557L975 567M925 287L939 279M934 322L948 314M947 374L960 366M960 425L973 417M971 476L984 469M990 523L997 519M777 394L757 412M786 430L766 448M767 353L748 371M757 312L738 328M747 270L729 286M798 481L778 499M810 533L791 550M822 584L804 601M741 328L755 353M749 325L758 343M736 341L746 357M732 359L740 359M744 410L752 411M747 427L755 427M759 448L757 457M757 461L763 462M769 513L777 513M945 655L960 674M852 668L840 688M871 677V688M908 676L909 683M921 673L923 681M939 667L947 687M815 652L835 636M963 609L987 618"/>
        <path id="knobs" d="M794 201v1M738 227h1M866 201l2 1M876 243l2 1M887 284l2 1M896 326l2 1M906 368l2 1M915 403l2 1M927 455l2 1M939 506l2 1M952 557l2 1M777 394l-1 1M786 430l-1 1M767 353l-1 1M757 312l-1 1M747 270l-1 1M798 481l-1 1M810 533l-1 1M822 584l-1 1M945 655l1 1M852 668v1"/>
        <path id="slabs" d="M888 132L920 122M678 137L700 142M726 111H757M797 86L812 80M774 213L771 232M988 534L1003 561M783 561L793 590M813 620L830 645M776 647L805 638M961 603L987 604M931 623L918 646M962 637L981 649"/>
      </defs>

      <g fill="none" stroke="#a85008" stroke-width="3.500"><path d="M902 180L905 245M907 178L912 205M912 177L917 203M918 177L923 203M909 212L914 245M916 212L920 244M922 212L926 242M927 212L931 240"/><path d="M902 181L905 245M907 179L912 204M912 178L917 202M918 178L923 202M916 213L920 243M922 213L926 241M927 213L931 239" stroke="#f08c28" stroke-width="1.500"/></g>
      <path d="M905 210L925 205" stroke="#0030c0" stroke-width="6"/><path d="M925 193L928 216" stroke="#000860" stroke-width="4"/>
      <path d="M978 484L980 508" stroke="#5c2c08" stroke-width="8"/>
      <path d="M976 511L985 508L991 522L990 532L984 531Z" fill="#00c8b0" stroke="#043c40"/>
      <ellipse cx="750" cy="409" rx="10" ry="30" transform="rotate(-12 750 409)" fill="#00108c" stroke="#000428"/>

      <g clip-path="url(#hull)">
        <path d="M680 75h340v620H680z" fill="url(#body)"/>
        <ellipse cx="798" cy="138" rx="116" ry="84" transform="rotate(-13 798 138)" fill="url(#cap)"/>
        <path d="M700 560h310v130H700z" fill="url(#base)"/>
        <ellipse cx="755" cy="295" rx="62" ry="54" fill="url(#glow)" opacity=".6"/>
        <ellipse cx="940" cy="600" rx="40" ry="42" fill="url(#glow2)"/>
        <ellipse cx="812" cy="605" rx="30" ry="36" fill="url(#glow)" opacity=".6"/>
        <path d="M820 655C875 662 950 650 992 608" fill="none" stroke="#000040"/>
      </g>

      <ellipse cx="782" cy="109" rx="32" ry="16" transform="rotate(-6 782 109)" fill="#0008a8" stroke="#000"/>
      <path d="M754 120Q778 137 807 118L806 123Q780 140 756 125Z" fill="#10e830" stroke="#033"/>
      <ellipse cx="782" cy="102" rx="25" ry="11" fill="#00808c" stroke="#012"/>
      <ellipse cx="784" cy="107" rx="20" ry="8" fill="#000c70" stroke="#001"/>
      <path d="M777 102L783 130M800 92L802 116M806 92L810 118" stroke="#7a3a08" stroke-width="5"/>
      <path d="M777 102L783 128M806 94L809 116M784 116L791 140" stroke="#e07818" stroke-width="3"/>
      <path d="M860 118L852 138M783 156L787 170" stroke="#4c2408" stroke-width="4"/><path d="M860 118l-4 10M783 155v3" stroke="#c86a18" stroke-width="3"/>

      <path d="M712 261C735 250 765 285 762 318C760 330 752 328 742 322Z" fill="#063c18" stroke="#020"/>
      <path d="M710 261C730 262 756 290 755 316L737 325C730 300 720 280 704 264Z" fill="url(#neck)" stroke="#032"/>
      <ellipse cx="713" cy="301" rx="21" ry="47" transform="rotate(-24 713 301)" fill="#0030b8" stroke="#000830"/>
      <ellipse cx="710" cy="303" rx="20" ry="46" transform="rotate(-24 710 303)" fill="#0048c8" stroke="#000c40"/>
      <ellipse cx="706" cy="304" rx="19" ry="45" transform="rotate(-24 706 304)" fill="url(#plate)" stroke="#001040"/>
      <path d="M728 251v21M720 254v22M712 258v14" stroke="#5c2c10" stroke-width="4"/><path d="M728 252v10M720 255v8M712 259v12" stroke="#d87018" stroke-width="2"/>

      <ellipse cx="938" cy="600" rx="22" ry="25" transform="rotate(18 938 600)" fill="#2a9c10" stroke="#042c04"/>
      <ellipse cx="943" cy="602" rx="18" ry="19" transform="rotate(18 943 602)" fill="#18a878" stroke="#032"/>
      <ellipse cx="942" cy="604" rx="14" ry="15" transform="rotate(18 942 604)" fill="#78a408" stroke="#230"/>
      <path d="M917 571L936 594" stroke="#5c2c08" stroke-width="5"/><path d="M917 571L930 586" stroke="#d87018" stroke-width="3"/>

      <ellipse cx="811" cy="604" rx="10" ry="20" transform="rotate(-18 811 604)" fill="#064a10" stroke="#020"/>
      <ellipse cx="806" cy="606" rx="9" ry="18" transform="rotate(-22 806 606)" fill="#10b8a0" stroke="#022"/>
      <ellipse cx="799" cy="609" rx="7" ry="17" transform="rotate(-22 799 609)" fill="#10e0a0" stroke="#022"/>
      <ellipse cx="802" cy="606" rx="3" ry="13" transform="rotate(-22 802 606)" fill="#031c20"/>
      <path d="M785 621L792 616" stroke="#3c1c08" stroke-width="4"/>

      <g fill="none" stroke="#b030f0">
        <ellipse cx="792" cy="158" rx="99" ry="52" transform="rotate(-13 792 158)"/>
        <ellipse cx="840" cy="357" rx="99" ry="52" transform="rotate(-13 840 357)"/>
        <path d="M782 105L829 305M793 212L861 406M909 361h6M912 358v6M715 260C740 270 762 300 754 318"/>
      </g>

      <use href="#slabs" fill="none" stroke="#7a3c08" stroke-width="9"/>
      <use href="#slabs" fill="none" stroke="#e07818" stroke-width="7"/>
      <use href="#slabs" fill="none" stroke="#a05010" stroke-width="4"/>
      <use href="#slabs" fill="none" stroke="#e07818" stroke-width="2"/>
      <use href="#rods" fill="none" stroke="#5c2c04" stroke-width="5"/>
      <use href="#knobs" fill="none" stroke="#6a3404" stroke-width="6" stroke-linecap="round"/>
      <use href="#rods" fill="none" stroke="#dc7418" stroke-width="3"/>
      <use href="#knobs" fill="none" stroke="#e07c1c" stroke-width="4" stroke-linecap="round"/>

      <circle cx="962" cy="428" r="5" fill="none" stroke="#4c7088" stroke-width="2.500"/><circle cx="962" cy="428" r="5" fill="none" stroke="#c8e0ec"/>

      <path d="M749 322L784 335" stroke="#fff"/><circle cx="749" cy="322" r="1.500" fill="#fff"/>
      <rect x="746.500" y="334.500" width="74" height="23" fill="#6060b8" fill-opacity=".88" stroke="#fff" stroke-width="1.500"/>
      <path d="M748 336h27v20h-27z" fill="#484888" fill-opacity=".6"/><path d="M775 336v20" stroke="#303070"/>
      <text class="callout" x="752" y="349">Max:</text><text class="callout" x="778" y="349">1253.8</text>

      <path d="M469 645L465 630" stroke="#10c030" stroke-width="2"/><path d="M463 623l6 8-7 1z" fill="#109030"/>
      <path d="M469 645L454 652" stroke="#0818a0" stroke-width="2"/><path d="M448 655l6-5 2 5z" fill="#0818a0"/>
      <path d="M469 645L477 651" stroke="#c82818" stroke-width="2"/><path d="M482 654l-7-1 3-5z" fill="#c82818"/>
      <text class="axis" x="461" y="621" fill="#40b858">Y</text><text class="axis" x="482" y="656" fill="#d84838">X</text><text class="axis" x="442" y="657" fill="#4850a8">Z</text>
    </svg>

    <p class="info">Model name: Pressure vessel<br>Study name: temperature(-Default-)<br>Plot type: Static nodal stress Stress1<br>Deformation scale: 1</p>

    <div class="heads">
      <svg class="ico"><use href="#i-grid"/></svg><svg class="ico"><use href="#i-dim"/></svg><svg class="ico"><use href="#i-cube"/></svg><svg class="ico"><use href="#i-cube"/></svg><svg class="ico dim"><use href="#i-thermo"/></svg><svg class="ico dim"><use href="#i-tools"/></svg><svg class="ico dim"><use href="#i-cube"/></svg><svg class="ico"><use href="#i-brush"/></svg><svg class="ico"><use href="#i-bars"/></svg><svg class="ico"><use href="#i-pencil"/></svg><svg class="ico"><use href="#i-copy"/></svg><i class="caret"></i><svg class="ico"><use href="#i-cube"/></svg><i class="caret"></i><svg class="ico"><use href="#i-eye"/></svg><i class="caret"></i><svg class="ico"><use href="#i-look"/></svg><svg class="ico"><use href="#i-scene"/></svg><i class="caret"></i><svg class="ico"><use href="#i-monitor"/></svg><i class="caret"></i>
    </div>
    <div class="docwin">
      <button aria-label="Dock left"><svg class="ico"><use href="#i-dockl"/></svg></button><button aria-label="Dock right"><svg class="ico"><use href="#i-dockr"/></svg></button><button aria-label="Minimize document"><svg class="ico"><use href="#i-min"/></svg></button><button aria-label="Restore document"><svg class="ico"><use href="#i-restore"/></svg></button><button aria-label="Close document"><svg class="ico"><use href="#i-close"/></svg></button>
    </div>
    <div class="taskpane">
      <button class="active" aria-label="Resources"><svg class="ico"><use href="#i-home"/></svg></button><button aria-label="Design library"><svg class="ico"><use href="#i-books"/></svg></button><button aria-label="File explorer"><svg class="ico"><use href="#i-open2"/></svg></button><button aria-label="View palette"><svg class="ico"><use href="#i-palette"/></svg></button><button aria-label="Appearances"><svg class="ico"><use href="#i-ball"/></svg></button><button aria-label="Custom properties"><svg class="ico"><use href="#i-list"/></svg></button><button aria-label="Forum"><svg class="ico"><use href="#i-forum"/></svg></button><button aria-label="Marketplace"><svg class="ico"><use href="#i-globe"/></svg></button>
    </div>
    <div class="legend">
      <div class="legend-title">von Mises (N/mm^2 (MPa))</div>
      <div class="scale">
        <svg class="arrow" viewBox="0 0 21 8"><path d="M0 4h15" stroke="#e02818"/><path d="M14 0v8l7-4z" fill="#f01808"/></svg>
        <div class="bar"></div>
        <div class="ticks"><i></i><i></i><i></i><i></i><i></i><i></i><i></i><i></i><i></i><i></i><i></i><i></i><i></i></div>
        <div class="values"><span>1253.8</span><span>1149.4</span><span>1044.9</span><span>940.4</span><span>835.9</span><span>731.4</span><span>626.9</span><span>522.4</span><span>417.9</span><span>313.5</span><span>209.0</span><span>104.5</span><span>0.0</span></div>
      </div>
      <div class="yield"><svg class="arrow" viewBox="0 0 21 8"><path d="M0 4h15" stroke="#e02818"/><path d="M14 0v8l7-4z" fill="#f01808"/></svg>Yield strength: 220.6</div>
    </div>
  </section>
</main>

<footer class="ticker">
  <span class="now">orks ViHoth&nbsp; - www.vihoth.com</span>
  <span class="next">Livestream on Fanpage: Pha</span>
</footer>
</body>
</html>
```
FILE: styles.css
```css
* { box-sizing: border-box; }
html, body { height: 100%; margin: 0; }
body {
  display: flex;
  flex-direction: column;
  overflow: hidden;
  background: #fff;
  color: #222;
  font: 10px/16px "Open Sans", "Noto Sans", sans-serif;
}
button, input { font: inherit; color: inherit; }
button {
  display: flex;
  align-items: center;
  justify-content: center;
  padding: 0;
  border: 0;
  background: none;
}
input { min-width: 0; border: 0; padding: 0; background: none; outline: 0; }
ul { list-style: none; margin: 0; padding: 0; }
.defs { position: absolute; width: 0; height: 0; }
.ico { width: 13px; height: 13px; flex: none; display: block; }
.caret {
  flex: none;
  width: 0;
  height: 0;
  border: 2px solid transparent;
  border-top-color: #444;
  border-bottom: 0;
}

/* Title bar */
.titlebar {
  position: relative;
  flex: none;
  display: flex;
  align-items: center;
  height: 27px;
  border-top: 1px solid #999;
  border-bottom: 1px solid #777;
  background: #f8f8f8;
  font-size: 9px;
}
.brand {
  display: flex;
  align-items: center;
  width: 98px;
  padding-left: 4px;
  color: #d8302c;
  font-style: italic;
}
.brand-mark { width: 14px; height: 14px; margin-right: 2px; }
.menu { display: flex; gap: 10px; padding-top: 1px; }
.pin { margin-left: 8px; color: #888; width: 11px; height: 11px; }
.quick { display: flex; align-items: center; gap: 10px; margin-left: 4px; padding-left: 15px; border-left: 1px solid #eee; }
.drop::after {
  content: "";
  margin-left: 5px;
  border: 2px solid transparent;
  border-top-color: #333;
  border-bottom: 0;
}
.doc-title { margin-left: auto; }
.search {
  display: flex;
  align-items: center;
  gap: 4px;
  width: 166px;
  height: 20px;
  margin: 0 10px 0 4px;
  padding: 0 4px 0 3px;
  border: 1px solid #bbb;
  background: #fff;
}
.search input { flex: 1; }
.search input::placeholder { color: #777; opacity: 1; }
.win { display: flex; gap: 14px; padding-right: 10px; }
.floatbar {
  position: absolute;
  top: -1px;
  left: 526px;
  display: flex;
  align-items: center;
  height: 20px;
  padding: 0 1px;
  border: 1px solid #777;
  border-top-color: #999;
  background: #f8f8f8;
}
.floatbar button { width: 16px; height: 16px; }
.floatbar .on { background: #b8dcf8; color: #1c5c98; }
.floatbar .ico { width: 12px; height: 12px; }
.floatbar hr { width: 1px; height: 12px; margin: 0 1px; border: 0; background: #bbb; }

/* Ribbon */
.ribbon {
  flex: none;
  display: grid;
  grid-template-columns: 54px 42px 48px 72px 97px 93px 41px 70px 69px 47px 43px 95px 129px 1fr;
  height: 54px;
  border-bottom: 1px solid #bbb;
  background: #f5f5f5;
  font-size: 9px;
}
.tool {
  display: flex;
  flex-direction: column;
  justify-content: flex-start;
  align-items: center;
  line-height: 12px;
  white-space: nowrap;
}
.tool .ico { width: 14px; height: 14px; }
.split { padding-top: 3px; }
.split .ico { margin-bottom: 1px; }
.split .caret { margin-top: 14px; }
.tall { padding-top: 9px; }
.end { border-right: 1px solid #bbb; }
.pressed { background: #b3afb3; border: 1px solid #888; padding-top: 8px; }
.stack { display: flex; flex-direction: column; }
.stack button { justify-content: flex-start; gap: 5px; height: 18px; padding-left: 2px; white-space: nowrap; }
.stack .caret { margin: 0 4px 0 auto; }

/* Work area */
.work {
  flex: 1;
  min-height: 0;
  display: grid;
  grid-template-columns: 435px 1fr;
  grid-template-rows: 20px 1fr;
}
.tabs {
  grid-area: 1 / 1 / 2 / 3;
  z-index: 1;
  justify-self: start;
  display: grid;
  grid-template-columns: 55px 42px 41px 46px 51px 113px 97px 67px;
  border-bottom: 1px solid #888;
}
.tabs button { border-right: 1px solid #888; background: #d6d6d6; white-space: nowrap; color: #333; }
.tabs .active { background: #f7f7f7; font-weight: 700; }

.panel {
  position: relative;
  grid-area: 2 / 1 / 3 / 2;
  min-height: 0;
  display: flex;
  flex-direction: column;
  padding-right: 2px;
  border-right: 1px solid #888;
  background: #f5f5f5;
}
.grip { display: flex; justify-content: center; align-items: center; flex: none; height: 19px; border-top: 2px solid #ddd; }
.grip::after { content: ""; width: 4px; height: 4px; border: 1px solid #888; border-radius: 50%; }
.grip.lower { height: 12px; border-color: #ccc; }
.ptabs { display: flex; flex: none; height: 17px; align-items: stretch; }
.ptabs button { width: 27px; border: 1px solid #999; border-left: 0; background: #d4d4d4; }
.ptabs .active { background: #fff; border-color: #eee #999 #fff; }
.chev { width: 8px; height: 10px; margin: 3px 0 0 auto; }
.filter {
  display: flex;
  align-items: center;
  flex: none;
  height: 22px;
  margin-left: 2px;
  border: 1px solid #bbb;
}
.filter input { flex: 1; }
.feature { display: flex; flex: none; height: 103px; overflow: hidden; }
.tree li { display: flex; align-items: center; height: 16px; white-space: nowrap; }
.tree i { flex: none; width: 14px; }
.tree .ico { margin-right: 2px; }
.tree i::before { content: ""; display: block; width: 0; height: 0; margin-left: 2px; }
.tree .shut::before { border: 3px solid transparent; border-left: 3px solid #555; border-right: 0; }
.tree .open::before { border: 3px solid transparent; border-top: 3px solid #555; border-bottom: 0; }
.feature .tree { flex: 1; padding-left: 2px; }
.l1 { padding-left: 2px; }
.l2 { padding-left: 17px; }
.l3 { padding-left: 32px; }
.picked {
  display: flex;
  align-items: center;
  height: 16px;
  margin-left: -2px;
  padding: 0 2px 0 1px;
  border: 1px solid #3c78b0;
  background: #91c1ee;
  color: #111;
}
.scroll { display: flex; flex-direction: column; width: 12px; padding: 4px 0; }
.scroll svg { width: 12px; height: 8px; flex: none; }
.thumb { height: 14px; margin: auto 0 8px; background: #c8c8c8; }
.side-grip {
  position: absolute;
  z-index: 2;
  left: 433px;
  top: 46%;
  display: grid;
  place-items: center;
  width: 8px;
  height: 32px;
  border: 1px solid #888;
  background: #f5f5f5;
}
.side-grip::after { content: ""; width: 3px; height: 3px; border: 1px solid #777; border-radius: 50%; }

/* Graphics area */
.view { position: relative; grid-area: 1 / 2 / 3 / 3; min-height: 0; overflow: hidden; border-right: 1px solid #555; }
.model { display: block; width: 100%; height: 100%; }
.callout { font-size: 10px; fill: #101030; }
.axis { font-size: 8px; }
.info { position: absolute; left: 13px; top: 30px; margin: 0; line-height: 13px; white-space: nowrap; }
.heads { position: absolute; left: 262px; top: 3px; display: flex; align-items: center; gap: 4px; }
.heads .ico { width: 13px; height: 14px; }
.heads .caret { margin: 0 1px; border-top-color: #888; }
.dim { opacity: .5; }
.docwin { position: absolute; right: 5px; top: 3px; display: flex; gap: 4px; color: #777; }
.taskpane { position: absolute; right: 0; top: 39px; width: 22px; border: 1px solid #888; border-right: 0; }
.taskpane button { width: 100%; height: 20px; border-bottom: 1px solid #999; background: #d8d8d8; }
.taskpane button:last-child { border-bottom: 0; height: 19px; }
.taskpane .active { background: #fff; }
.legend { position: absolute; right: 42px; top: 123px; color: #111; }
.legend-title { padding-left: 21px; }
.scale { position: relative; display: flex; height: 334px; margin-top: 11px; }
.arrow { width: 21px; height: 8px; flex: none; }
.scale .arrow { align-self: flex-end; margin-bottom: 56px; }
.bar {
  width: 22px;
  margin: 11px 0 3px;
  background: linear-gradient(#ff1800, #ff7800 10%, #ffd800 22%, #c8f000 31%, #20d800 42%, #00d000 52%, #00e880 62%, #00f0f0 74%, #00a8ff 83%, #0008ff 98%);
}
.ticks { display: flex; flex-direction: column; justify-content: space-between; margin: 11px 8px 2px 0; }
.ticks i { width: 3px; height: 1px; background: #333; }
.values { display: flex; flex-direction: column; justify-content: space-between; line-height: 14px; }
.yield { display: flex; align-items: center; gap: 2px; margin-top: 12px; white-space: nowrap; }

/* Ticker */
.ticker {
  flex: none;
  display: flex;
  justify-content: space-between;
  height: 32px;
  overflow: hidden;
  background: #0008ff;
  color: #fff;
  font: italic 28px/32px "Liberation Sans", Arial, sans-serif;
  white-space: nowrap;
}
.now { display: flex; justify-content: flex-end; width: 370px; }
.next { width: 349px; }
```
